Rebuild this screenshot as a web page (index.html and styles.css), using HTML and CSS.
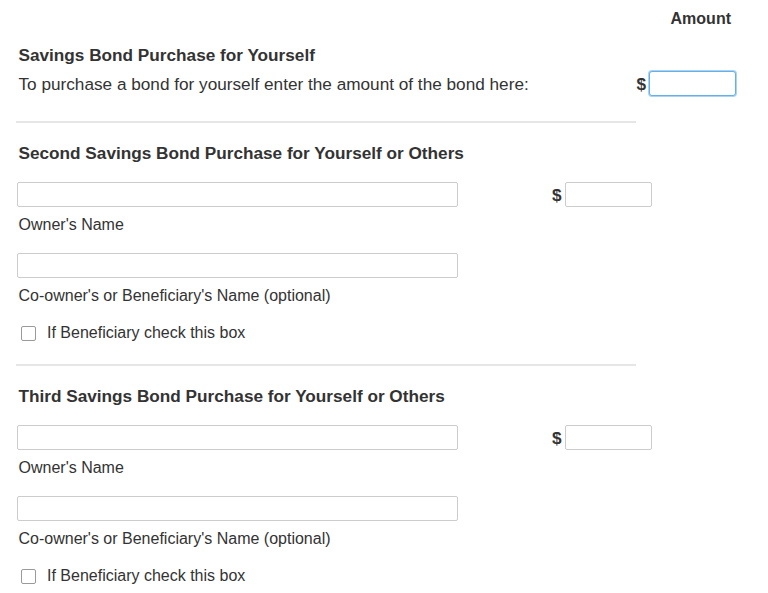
FILE: index.html
```html
<!DOCTYPE html>
<html lang="en">
<head>
<meta charset="utf-8">
<title>Savings Bond Purchase</title>
<link rel="stylesheet" href="styles.css">
</head>
<body>
<form class="form">
  <div class="amount-head">Amount</div>

  <section class="bond first">
    <h2 class="title">Savings Bond Purchase for Yourself</h2>
    <div class="row-one">
      <span class="text">To purchase a bond for yourself enter the amount of the bond here:</span>
      <span class="amount amount-one">
        <span class="dollar">$</span>
        <input type="text" class="field small focused">
      </span>
    </div>
  </section>

  <hr class="rule rule-one">

  <section class="bond">
    <h2 class="title">Second Savings Bond Purchase for Yourself or Others</h2>
    <div class="row-name">
      <input type="text" class="field wide">
      <span class="amount amount-other">
        <span class="dollar">$</span>
        <input type="text" class="field small">
      </span>
    </div>
    <div class="label">Owner's Name</div>
    <input type="text" class="field wide second">
    <div class="label">Co-owner's or Beneficiary's Name (optional)</div>
    <label class="check-row">
      <input type="checkbox" class="box">
      <span class="check-text">If Beneficiary check this box</span>
    </label>
  </section>

  <hr class="rule rule-two">

  <section class="bond">
    <h2 class="title">Third Savings Bond Purchase for Yourself or Others</h2>
    <div class="row-name">
      <input type="text" class="field wide">
      <span class="amount amount-other">
        <span class="dollar">$</span>
        <input type="text" class="field small">
      </span>
    </div>
    <div class="label">Owner's Name</div>
    <input type="text" class="field wide second">
    <div class="label">Co-owner's or Beneficiary's Name (optional)</div>
    <label class="check-row">
      <input type="checkbox" class="box">
      <span class="check-text">If Beneficiary check this box</span>
    </label>
  </section>
</form>
</body>
</html>
```

FILE: styles.css
```css
* {
  box-sizing: border-box;
}

html, body {
  margin: 0;
  padding: 0;
  background: #ffffff;
}

body {
  font-family: "Liberation Sans", Arial, sans-serif;
  font-size: 17.2px;
  line-height: 20px;
  color: #333333;
}

.form {
  width: 768px;
  padding: 0 0 0 16px;
  margin: 0;
}

.amount-head {
  height: 28px;
  padding: 10px 37px 0 0;
  text-align: right;
  font-size: 16px;
  line-height: 18px;
  font-weight: bold;
}

.bond {
  display: flex;
  flex-direction: column;
  align-items: flex-start;
}

.title {
  margin: 20px 0 0 0;
  padding-left: 2.5px;
  font-size: 17.2px;
  line-height: 20px;
  font-weight: bold;
  color: #333333;
}

.first .title {
  margin-top: 17px;
}

.row-one {
  margin-top: 6px;
  display: flex;
  align-items: center;
  width: 100%;
  height: 25px;
}

.text {
  padding-left: 2.5px;
}

.amount {
  display: flex;
  align-items: center;
  gap: 3px;
}

.amount-one {
  margin-left: auto;
  margin-right: 32px;
}

.amount-other {
  margin-left: 94px;
}

.dollar {
  font-weight: bold;
}

.field {
  display: block;
  height: 25px;
  margin: 0;
  padding: 2px 4px;
  border: 1px solid #cccccc;
  border-radius: 2px;
  background: #ffffff;
  font: inherit;
  outline: none;
}

.small {
  width: 87px;
}

.wide {
  width: 441px;
  margin-left: 1px;
}

.focused {
  border: 1px solid #66afe9;
  border-radius: 3px;
  box-shadow: 0 0 0 1px rgba(102, 175, 233, 0.55);
}

.row-name {
  margin-top: 19px;
  display: flex;
  align-items: center;
}

.label {
  margin-top: 9px;
  padding-left: 2.5px;
  font-size: 16px;
  line-height: 18px;
}

.second {
  margin-top: 19px;
}

.check-row {
  margin-top: 19px;
  display: flex;
  align-items: flex-start;
  gap: 11px;
  padding-left: 5px;
  font-size: 16px;
  line-height: 18px;
}

.box {
  appearance: none;
  -webkit-appearance: none;
  width: 15px;
  height: 15px;
  margin: 2px 0 0 0;
  border: 1px solid #9a9a9a;
  border-radius: 2px;
  background: #ffffff;
}

.rule {
  width: 620px;
  height: 2px;
  margin: 0;
  border: 0;
  background: #e6e6e6;
}

.rule-one {
  margin-top: 25px;
}

.rule-two {
  margin-top: 22px;
}
```
